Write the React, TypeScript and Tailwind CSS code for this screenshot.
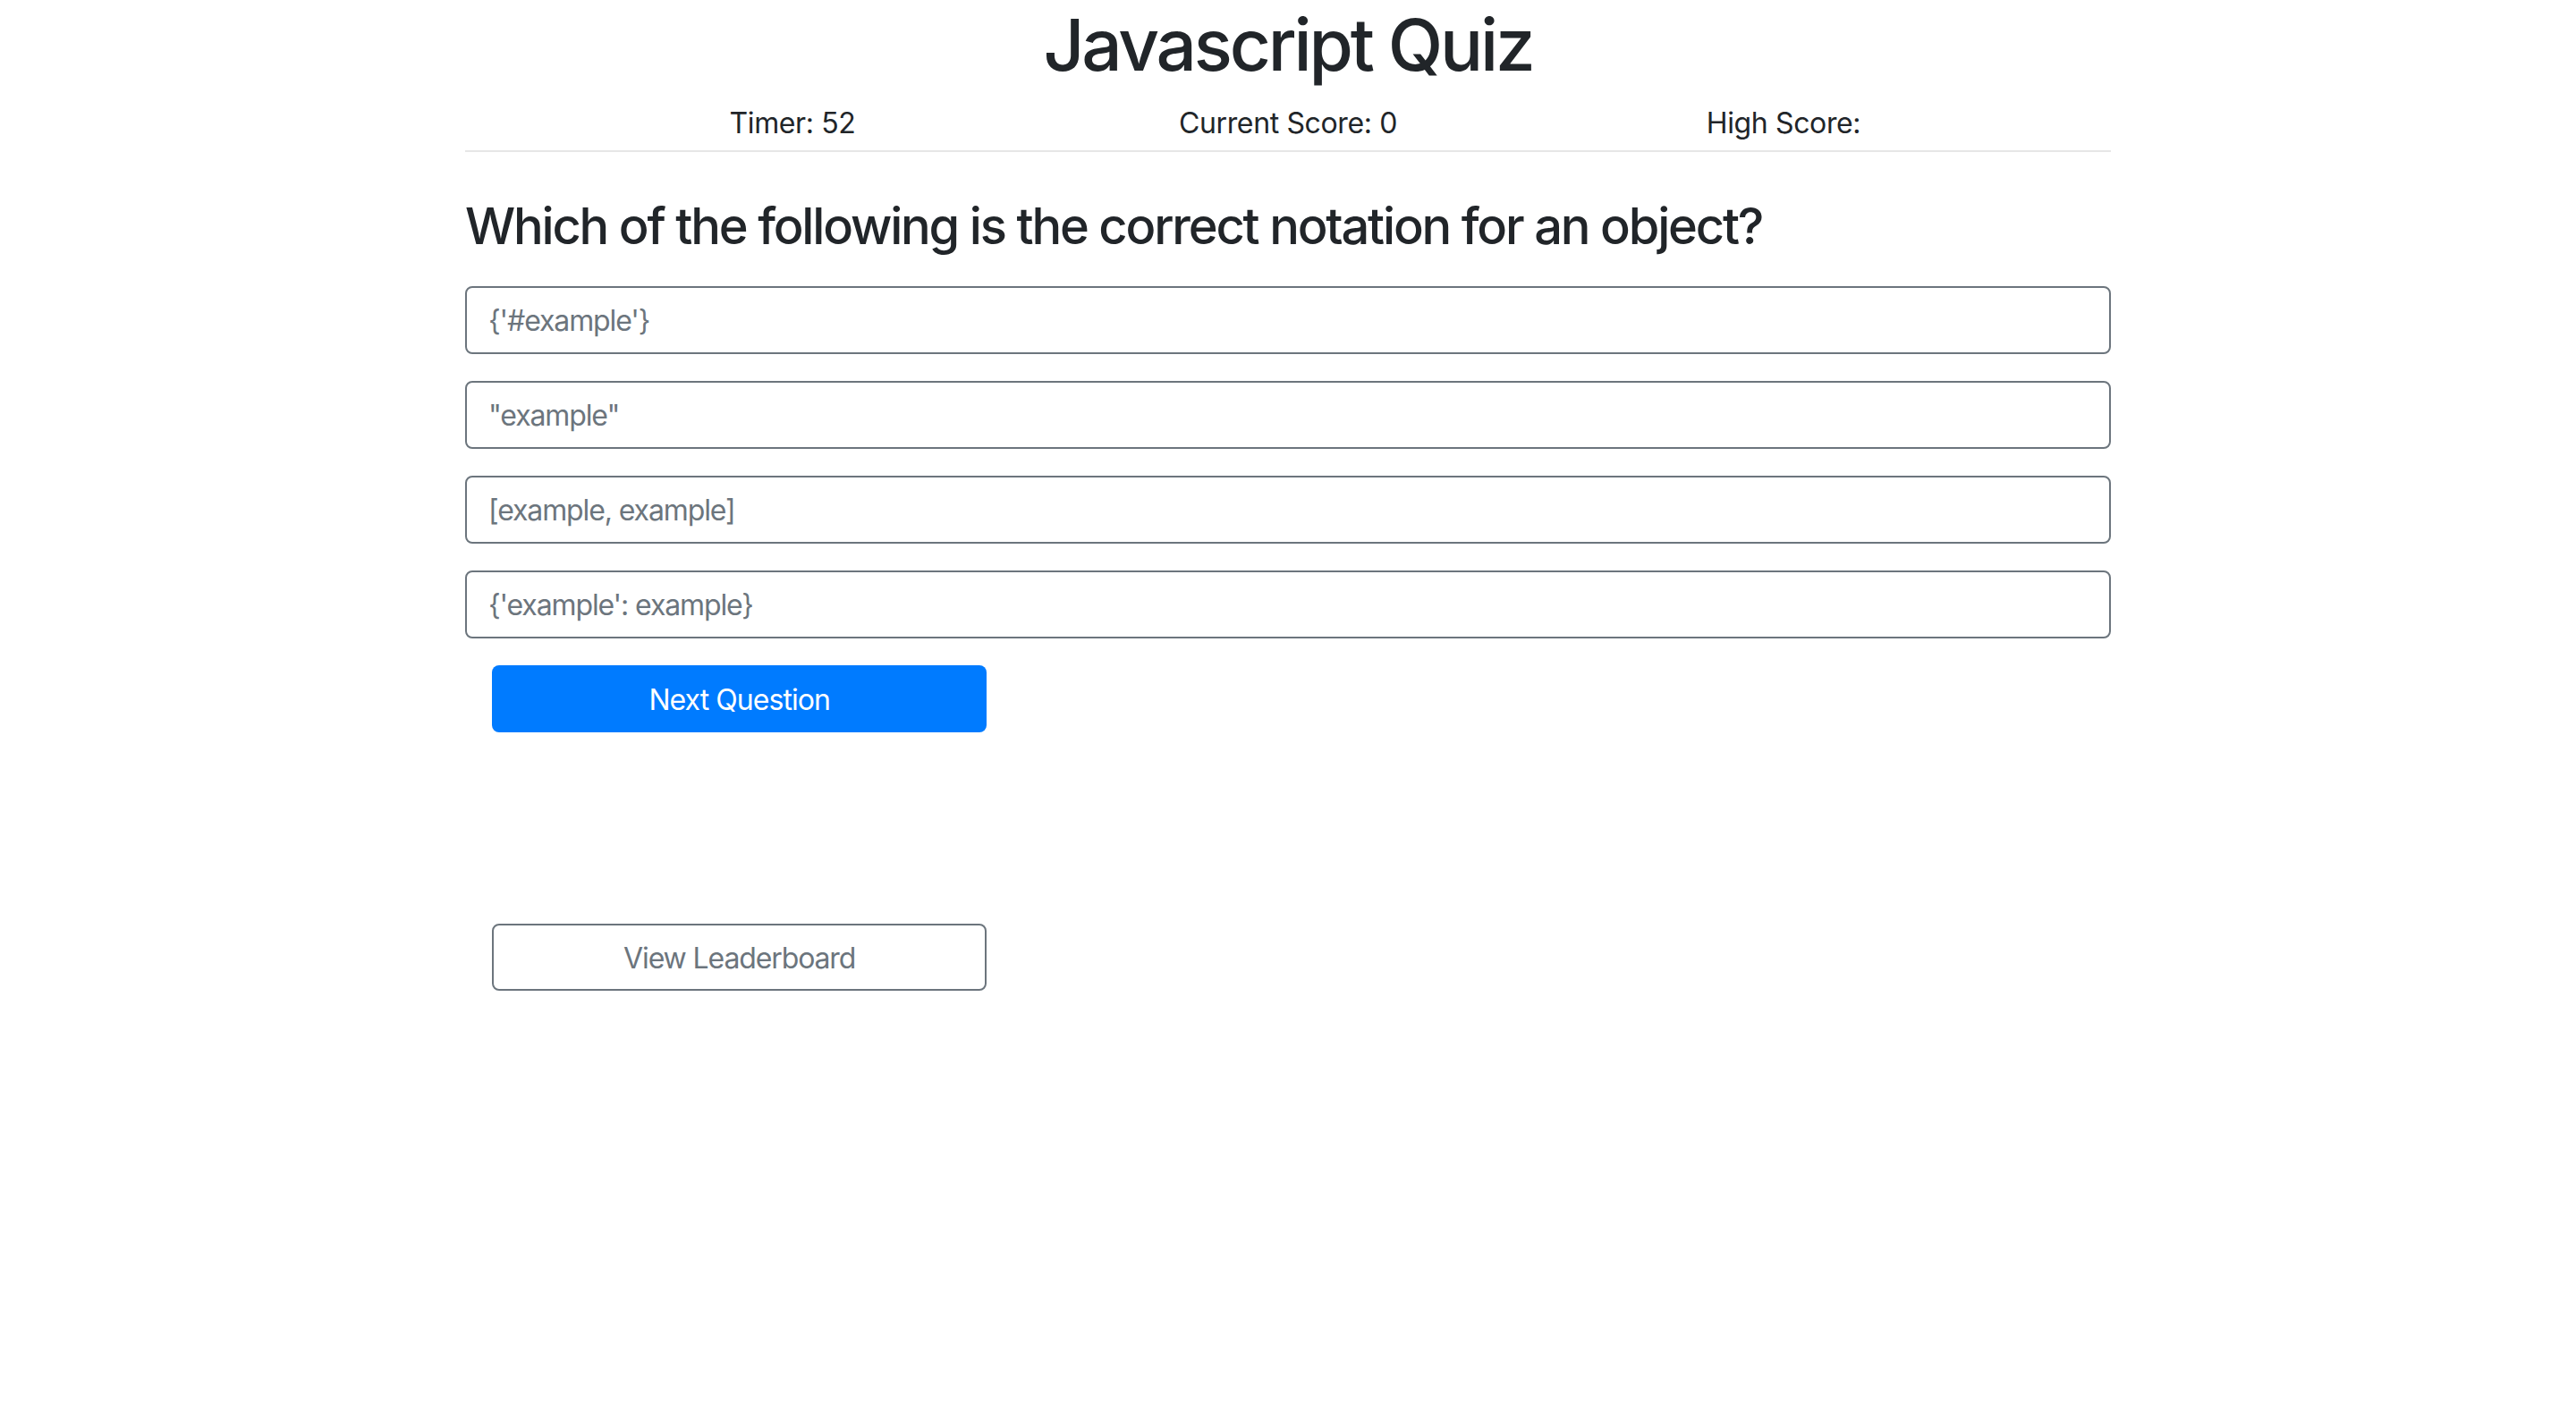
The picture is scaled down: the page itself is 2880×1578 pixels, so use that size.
const choices = ["{'#example'}", '"example"', "[example, example]", "{'example': example}"];

export default function App() {
	return (
		<div className="min-h-screen bg-white font-['Inter','Liberation_Sans',sans-serif] text-[#212529] tracking-[-0.023em]">
			<div className="mx-auto w-[1840px]">
				<h1 className="pt-[2px] mb-[16px] text-center text-[80px] font-medium leading-[96px] tracking-[-0.04em]">Javascript Quiz</h1>

				<div className="mx-auto grid w-[1662px] grid-cols-3 text-center text-[32px] leading-[48px]">
					<p>Timer: 52</p>
					<p>Current Score: 0</p>
					<p>High Score:</p>
				</div>
				<div className="mt-[6px] h-[2px] bg-[#e6e6e6]" />

				<h3 className="mt-[50px] text-[56px] font-medium leading-[67px] tracking-[-0.039em]">Which of the following is the correct notation for an object?</h3>

				<div className="mt-[33px] flex flex-col gap-[30px]">
					{choices.map((c) => (
						<button key={c} className="h-[76px] w-full rounded-[8px] border-2 border-[#6c757d] bg-white px-[24px] pt-[2px] text-left text-[32px] tracking-[-0.035em] text-[#6c757d]">
							{c}
						</button>
					))}
				</div>

				<div className="mt-[30px] grid grid-cols-3">
					<div className="px-[30px]">
						<button className="h-[75px] w-full rounded-[8px] bg-[#007bff] pt-[2px] text-[32px] tracking-[-0.03em] text-white">Next Question</button>
					</div>
				</div>

				<div className="mt-[214px] grid grid-cols-3">
					<div className="px-[30px]">
						<button className="h-[75px] w-full rounded-[8px] border-2 border-[#6c757d] bg-white pt-[2px] text-[32px] tracking-[-0.035em] text-[#6c757d]">View Leaderboard</button>
					</div>
				</div>
			</div>
		</div>
	);
}
